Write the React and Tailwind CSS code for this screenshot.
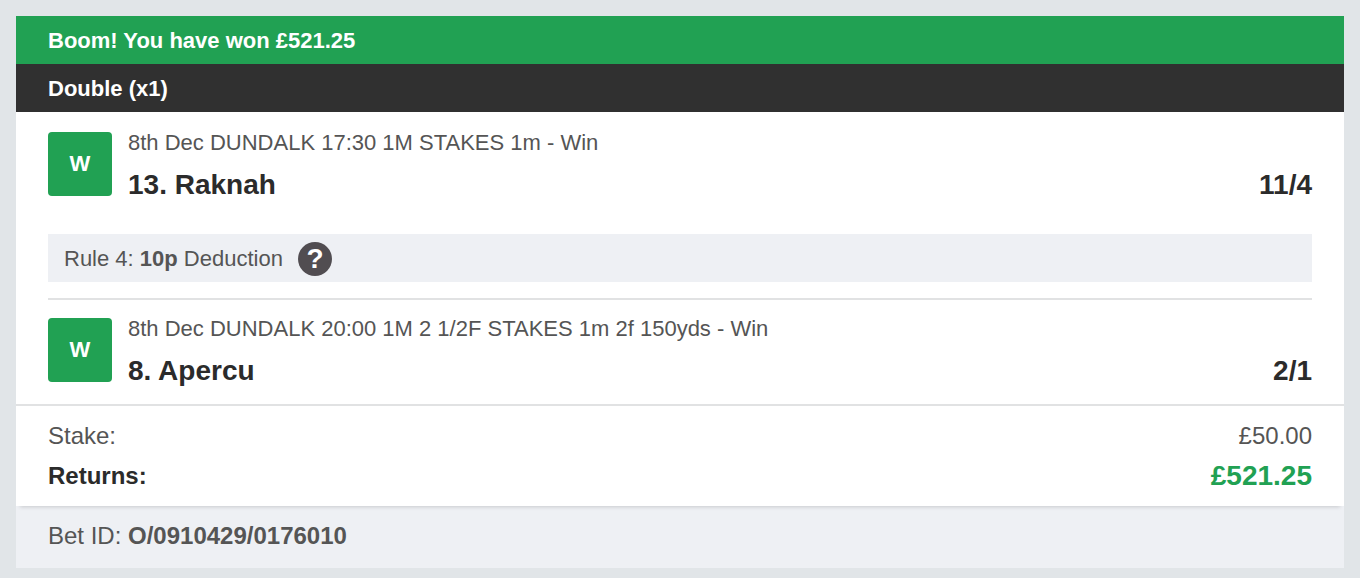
import React from "react";

const selections = [
  {
    id: 1,
    result: "W",
    event: "8th Dec DUNDALK 17:30 1M STAKES 1m - Win",
    name: "13. Raknah",
    odds: "11/4",
    deduction: "10p",
  },
  {
    id: 2,
    result: "W",
    event: "8th Dec DUNDALK 20:00 1M 2 1/2F STAKES 1m 2f 150yds - Win",
    name: "8. Apercu",
    odds: "2/1",
  },
];

function Selection({ selection }) {
  return (
    <li className="border-t-2 border-[#e1e2e3] pt-[18px] first:border-white">
      <div className="flex gap-4 pb-[18px]">
        <span className="flex h-16 w-16 shrink-0 items-center justify-center rounded bg-[#21a153] text-[22px] leading-8 font-bold text-white">
          {selection.result}
        </span>
        <div className="min-w-0 flex-1">
          <p className="text-[22px] leading-[22px] text-[#555]">{selection.event}</p>
          <div className="mt-4 flex justify-between text-[28px] leading-[30px] font-bold text-[#2b2b2b]">
            <h3>{selection.name}</h3>
            <span>{selection.odds}</span>
          </div>
        </div>
      </div>

      {selection.deduction && (
        <div className="my-4 flex h-12 items-center bg-[#eef0f4] px-4 pt-0.5 text-[22px] leading-8 text-[#555]">
          <p>
            Rule 4: <b>{selection.deduction}</b> Deduction
          </p>
          <button
            type="button"
            aria-label="About Rule 4"
            className="ml-[15px] flex h-[34px] w-[34px] items-center justify-center rounded-full bg-[#514d51] text-[28px] leading-8 font-bold text-white"
          >
            ?
          </button>
        </div>
      )}
    </li>
  );
}

export default function App() {
  return (
    <div className="min-h-screen bg-[#e1e5e8] px-4 pt-4 pb-2 font-['Liberation_Sans',Arial,sans-serif]">
      <article>
        <h1 className="bg-[#21a153] px-8 pt-0.5 text-[22px] leading-[46px] font-bold text-white">
          Boom! You have won £521.25
        </h1>
        <h2 className="bg-[#303030] px-8 pt-0.5 text-[22px] leading-[46px] font-bold text-white">
          Double (x1)
        </h2>

        <ul className="bg-white px-8">
          {selections.map((s) => (
            <Selection key={s.id} selection={s} />
          ))}
        </ul>

        {/* Totals */}
        <dl className="relative border-t-2 border-[#e1e2e3] bg-white px-8 py-2.5 text-[24px] leading-10 shadow-[0_5px_4px_-4px_rgba(0,0,0,0.16)]">
          <div className="flex justify-between text-[#555]">
            <dt>Stake:</dt>
            <dd>£50.00</dd>
          </div>
          <div className="flex justify-between font-bold text-[#2b2b2b]">
            <dt>Returns:</dt>
            <dd className="text-[28px] text-[#21a153]">£521.25</dd>
          </div>
        </dl>

        <footer className="bg-[#eef0f4] px-8 pb-0.5 text-[24px] leading-[60px] text-[#555]">
          Bet ID: <b>O/0910429/0176010</b>
        </footer>
      </article>
    </div>
  );
}
